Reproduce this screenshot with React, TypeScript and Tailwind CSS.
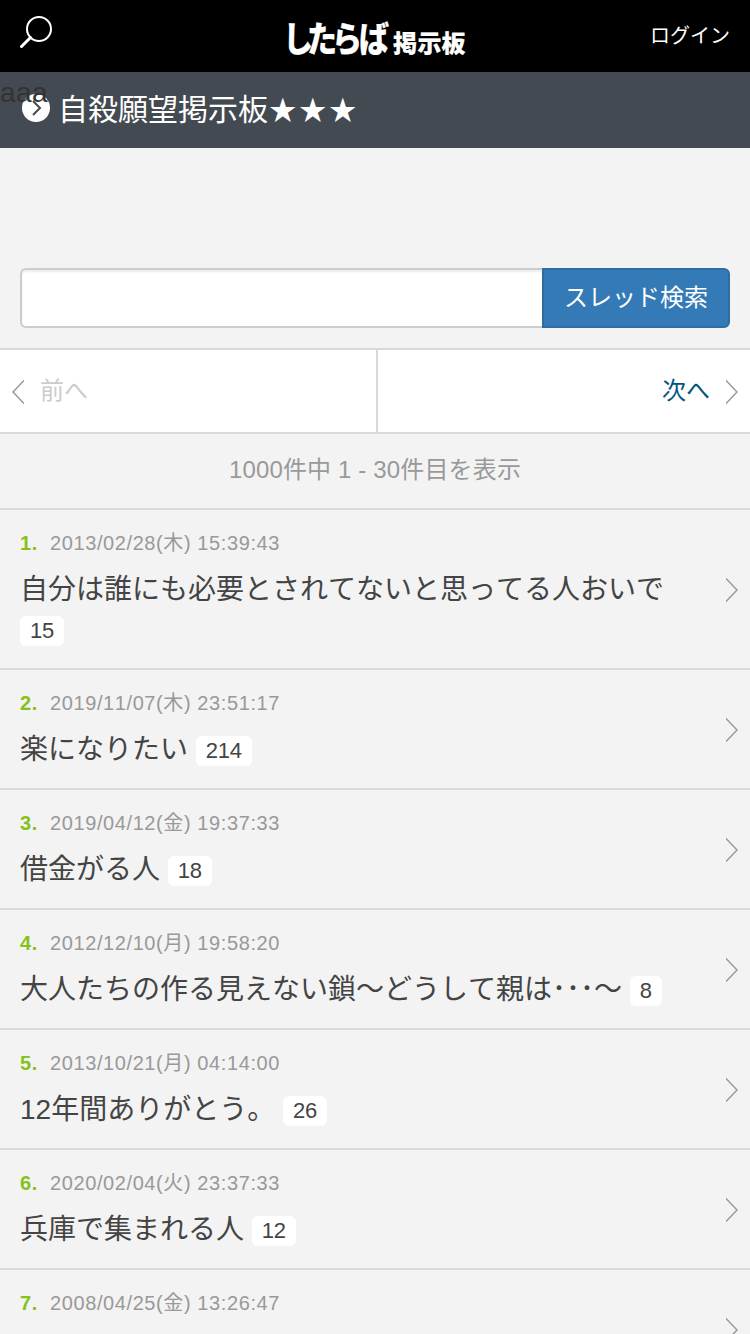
import React from 'react';

type Thread = { date: string; title?: string; count?: number };

const threads: Thread[] = [
  { date: '2013/02/28(木) 15:39:43', title: '自分は誰にも必要とされてないと思ってる人おいで', count: 15 },
  { date: '2019/11/07(木) 23:51:17', title: '楽になりたい', count: 214 },
  { date: '2019/04/12(金) 19:37:33', title: '借金がる人', count: 18 },
  { date: '2012/12/10(月) 19:58:20', title: '大人たちの作る見えない鎖〜どうして親は･･･〜', count: 8 },
  { date: '2013/10/21(月) 04:14:00', title: '12年間ありがとう。', count: 26 },
  { date: '2020/02/04(火) 23:37:33', title: '兵庫で集まれる人', count: 12 },
  { date: '2008/04/25(金) 13:26:47' },
];

function Chevron({ left = false }: { left?: boolean }) {
  return (
    <svg width="12" height="24" viewBox="0 0 12 24" fill="none" stroke="#999" strokeWidth="1.5" className="shrink-0">
      <path d={left ? 'M13 -0.5 L1 12 L13 24.5' : 'M-1 -0.5 L11 12 L-1 24.5'} />
    </svg>
  );
}

function Logo() {
  return (
    <svg width="184" height="48" viewBox="0 0 184 48" className="block overflow-visible" fill="#fff" stroke="#fff" strokeLinejoin="round" fontFamily="'Noto Sans CJK JP', sans-serif" fontWeight="900">
      <text transform="translate(0 40) scale(0.86 1)" x="0 28 57 88.5" y="0" fontSize="35" strokeWidth="0.2">したらば</text>
      <text x="110 134.5 158.5" y="39.5" fontSize="24" strokeWidth="0.2">掲示板</text>
    </svg>
  );
}

export default function App() {
  return (
    <div className="relative h-[1334px] w-[750px] overflow-hidden bg-[#f3f3f3] font-['Liberation_Sans','Noto_Sans_CJK_JP',sans-serif] text-[#444] [font-kerning:none]">
      <header className="grid h-[72px] grid-cols-[1fr_184px_1fr] items-center bg-black px-5 text-white">
        <svg width="34" height="34" viewBox="0 0 34 34" fill="none" stroke="#fff" className="-mt-1.5">
          <circle cx="19" cy="13" r="12" strokeWidth="2" />
          <path d="M10.5 21.5 L1.5 30.5" strokeWidth="3" strokeLinecap="round" />
        </svg>
        <Logo />
        <a className="text-right text-[20px] leading-[28px]">ログイン</a>
      </header>

      <div className="flex h-[76px] items-center bg-[#434a51] pl-[22px] text-white">
        <svg width="28" height="28" viewBox="0 0 28 28" className="mr-2 -mt-1">
          <circle cx="14" cy="14" r="14" fill="#fff" />
          <path d="M11 7 L18 14 L11 21" fill="none" stroke="#434a51" strokeWidth="2" />
        </svg>
        <h1 className="text-[30px] leading-[40px]">
          自殺願望掲示板<span className="ml-px text-[27.5px] tracking-[2.5px]">★★★</span>
        </h1>
      </div>
      <span className="absolute left-0 top-[73px] text-[28px] leading-[40px] tracking-[0.4px] text-[#333]">aaa</span>

      <form className="mt-[120px] flex h-[60px] px-5">
        <input className="min-w-0 flex-1 rounded-l-md border-2 border-r-0 border-[#ccc] bg-white shadow-[inset_0_2px_2px_rgba(0,0,0,0.075)] outline-none" />
        <button type="button" className="w-[188px] rounded-r-md border-2 border-[#2e6da4] bg-[#337ab7] text-[24px] text-white">スレッド検索</button>
      </form>

      <nav className="mt-5 flex h-[86px] border-y-2 border-[#d9d9d9] bg-white text-[24px]">
        <a className="flex w-[378px] items-center border-r-2 border-[#d9d9d9] pl-3 pt-0.5 text-[#ccc]">
          <Chevron left />
          <span className="-mt-[3px] ml-4">前へ</span>
        </a>
        <a className="flex flex-1 items-center justify-end pr-3 pt-0.5 text-[#00557c]">
          <span className="-mt-[3px] mr-4">次へ</span>
          <Chevron />
        </a>
      </nav>

      <p className="h-[74px] text-center text-[24px] leading-[72px] tracking-[0.15px] text-[#999]">1000件中 1 - 30件目を表示</p>

      <ul>
        {threads.map((t, i) => (
          <li key={t.date} className="flex min-h-[120px] items-center border-t-2 border-[#d9d9d9] py-[17px] pl-5 pr-3">
            <div className="min-h-[84px] w-[670px]">
              <div className="flex h-[32px] items-center text-[20px] tracking-[0.6px] text-[#999]">
                <b className="w-[30px] font-bold text-[#87c11c]">{i + 1}.</b>
                <span>{t.date}</span>
              </div>
              {t.title && (
                <p className="-mb-px pt-[11px] pb-0.5 text-[28px] leading-[40px]">
                  {t.title}{' '}
                  <span className="inline-block h-[30px] rounded-md bg-white px-[10px] align-[1px] text-[22px] leading-[30px] tracking-[-0.2px]">{t.count}</span>
                </p>
              )}
            </div>
            <div className="ml-auto pt-0.5"><Chevron /></div>
          </li>
        ))}
      </ul>
    </div>
  );
}
